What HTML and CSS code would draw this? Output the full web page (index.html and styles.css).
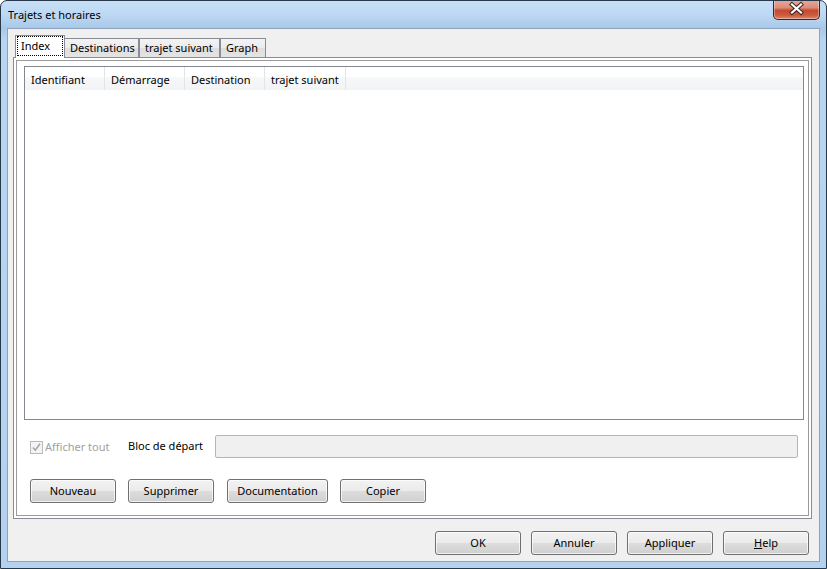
FILE: index.html
```html
<!DOCTYPE html>
<html lang="fr">
<head>
<meta charset="utf-8">
<title>Trajets et horaires</title>
<link rel="stylesheet" href="styles.css">
</head>
<body>
<div class="window">
  <div class="titlebar">
    <span class="title">Trajets et horaires</span>
    <div class="close">
      <svg width="47" height="20" viewBox="0 0 47 20">
        <path d="M19 5.5 L28 13.5 M28 5.5 L19 13.5" stroke="#3b2a28" stroke-width="4.2" stroke-linecap="square" fill="none"/>
        <path d="M19 5.5 L28 13.5 M28 5.5 L19 13.5" stroke="#ffffff" stroke-width="2.2" stroke-linecap="square" fill="none"/>
      </svg>
    </div>
  </div>
  <div class="client">
    <div class="tabs">
      <div class="tab active"><span class="focus">Index</span></div>
      <div class="tab t-dest">Destinations</div>
      <div class="tab t-next">trajet suivant</div>
      <div class="tab t-graph">Graph</div>
    </div>
    <div class="panel">
      <div class="page">
        <div class="list">
          <div class="list-header">
            <div class="col">Identifiant</div>
            <div class="col">Démarrage</div>
            <div class="col">Destination</div>
            <div class="col col-last">trajet suivant</div>
          </div>
        </div>
        <div class="filter-row">
          <label class="check-wrap">
            <span class="checkbox">
              <svg width="11" height="11" viewBox="0 0 11 11"><path d="M2 5.5 L4.3 8.2 L9 1.8" stroke="#a8a8a8" stroke-width="1.6" fill="none"/></svg>
            </span>
            <span class="check-label">Afficher tout</span>
          </label>
          <span class="field-label">Bloc de départ</span>
          <div class="field"></div>
        </div>
        <div class="btn-row">
          <button class="btn">Nouveau</button>
          <button class="btn b-supp">Supprimer</button>
          <button class="btn b-doc">Documentation</button>
          <button class="btn b-copy">Copier</button>
        </div>
      </div>
    </div>
    <div class="dialog-buttons">
      <button class="btn">OK</button>
      <button class="btn">Annuler</button>
      <button class="btn">Appliquer</button>
      <button class="btn"><u>H</u>elp</button>
    </div>
  </div>
</div>
</body>
</html>
```
FILE: styles.css
```css
* { box-sizing: border-box; }

body {
  margin: 0;
  font-family: "Noto Sans", "Open Sans", sans-serif;
  font-size: 11px;
  color: #000;
  background: #fff;
}

.window {
  width: 827px;
  height: 569px;
  border: 1px solid #27384a;
  border-radius: 7px 7px 0 0;
  background: linear-gradient(180deg, #c7dff7 0px, #bcd8f4 14px, #a9c8e8 27px, #b8d5f2 40px, #b4d1ef 100%);
  display: flex;
  flex-direction: column;
  overflow: hidden;
}

.titlebar {
  height: 27px;
  display: flex;
  justify-content: space-between;
  align-items: flex-start;
}

.title {
  padding-left: 7px;
  padding-top: 6px;
  line-height: 15px;
  color: #000;
}

.close {
  width: 47px;
  height: 20px;
  margin-top: -1px;
  margin-right: 6px;
  border: 1px solid #4a2018;
  border-top: none;
  border-radius: 0 0 5px 5px;
  background: linear-gradient(180deg, #e9a99a 0%, #dc8d7b 40%, #c44a30 55%, #cb5b3f 80%, #dd8a6d 100%);
  box-shadow: inset 0 0 0 1px rgba(255, 255, 255, 0.35);
  overflow: hidden;
}

.close svg { display: block; margin: -1px 0 0 -1px; }

.client {
  flex: 1;
  margin: 0 6px 6px 6px;
  border: 1px solid #8ea3ba;
  background: #f0f0f0;
  padding: 6px 7px 6px 5px;
  display: flex;
  flex-direction: column;
}

/* Tabs */
.tabs {
  height: 22px;
  padding-left: 2px;
  display: flex;
  align-items: flex-end;
  position: relative;
  z-index: 1;
}

.tab {
  height: 19px;
  border: 1px solid #898c95;
  border-bottom: none;
  background: linear-gradient(180deg, #f3f3f3 0%, #ebebeb 50%, #dedede 51%, #e4e4e4 100%);
  padding: 1px 0 0 5px;
  line-height: 16px;
  white-space: nowrap;
  margin-bottom: 0;
}

.tab.active {
  width: 50px;
  height: 23px;
  margin-bottom: -1px;
  background: #fff;
  padding: 0;
  position: relative;
  z-index: 2;
}

.focus {
  display: block;
  margin: 0 1px;
  height: 20px;
  border: 1px dotted #000;
  padding-left: 3px;
  line-height: 17px;
}

.t-dest { width: 75px; margin-left: -1px; }
.t-next { width: 81px; }
.t-graph { width: 46px; }

.panel {
  flex: 1;
  border: 1px solid #898c95;
  background: #fff;
  padding: 2px;
  display: flex;
}

.page {
  flex: 1;
  border: 1px solid #9a9a9a;
  display: flex;
  flex-direction: column;
  padding: 0 0 12px 0;
}

.list {
  height: 354px;
  margin: 5px 4px 0 7px;
  border: 1px solid #828790;
  background: #fff;
}

.list-header {
  height: 23px;
  display: flex;
  background: linear-gradient(180deg, #ffffff 0%, #ffffff 42%, #f7f8f9 43%, #f2f3f5 100%);
}

.col {
  width: 80px;
  border-right: 1px solid #e3e4e6;
  padding-left: 6px;
  padding-top: 2px;
  line-height: 22px;
  white-space: nowrap;
}

.col-last { width: 81px; }

.filter-row {
  height: 23px;
  margin-top: 15px;
  padding-left: 13px;
  display: flex;
  align-items: center;
}

.check-wrap {
  width: 98px;
  display: flex;
  align-items: center;
}

.checkbox {
  width: 13px;
  height: 13px;
  border: 1px solid #b9b9b9;
  background: #f4f4f4;
  display: flex;
  align-items: center;
  justify-content: center;
  margin-top: 1px;
}

.checkbox svg { display: block; }

.check-label {
  margin-left: 2px;
  color: #a0a0a0;
}

.field-label {
  width: 87px;
  margin-top: -2px;
}

.field {
  width: 583px;
  height: 23px;
  border: 1px solid #b5b5b5;
  border-radius: 2px;
  background: #f0f0f0;
}

.btn-row {
  height: 24px;
  margin-top: 21px;
  padding-left: 13px;
  display: flex;
}

.btn {
  width: 86px;
  height: 24px;
  border: 1px solid #707070;
  border-radius: 3px;
  background: linear-gradient(180deg, #f2f2f2 0%, #ebebeb 48%, #dddddd 50%, #cfcfcf 100%);
  box-shadow: inset 0 0 0 1px rgba(255, 255, 255, 0.7);
  font-family: "Noto Sans", "Open Sans", sans-serif;
  font-size: 11px;
  color: #000;
  padding: 0 0 1px 0;
  line-height: 20px;
  text-align: center;
}

.b-supp { margin-left: 12px; }
.b-doc { margin-left: 13px; width: 101px; }
.b-copy { margin-left: 12px; }

.dialog-buttons {
  height: 24px;
  margin-top: 12px;
  padding-right: 3px;
  display: flex;
  justify-content: flex-end;
  gap: 10px;
}
```
